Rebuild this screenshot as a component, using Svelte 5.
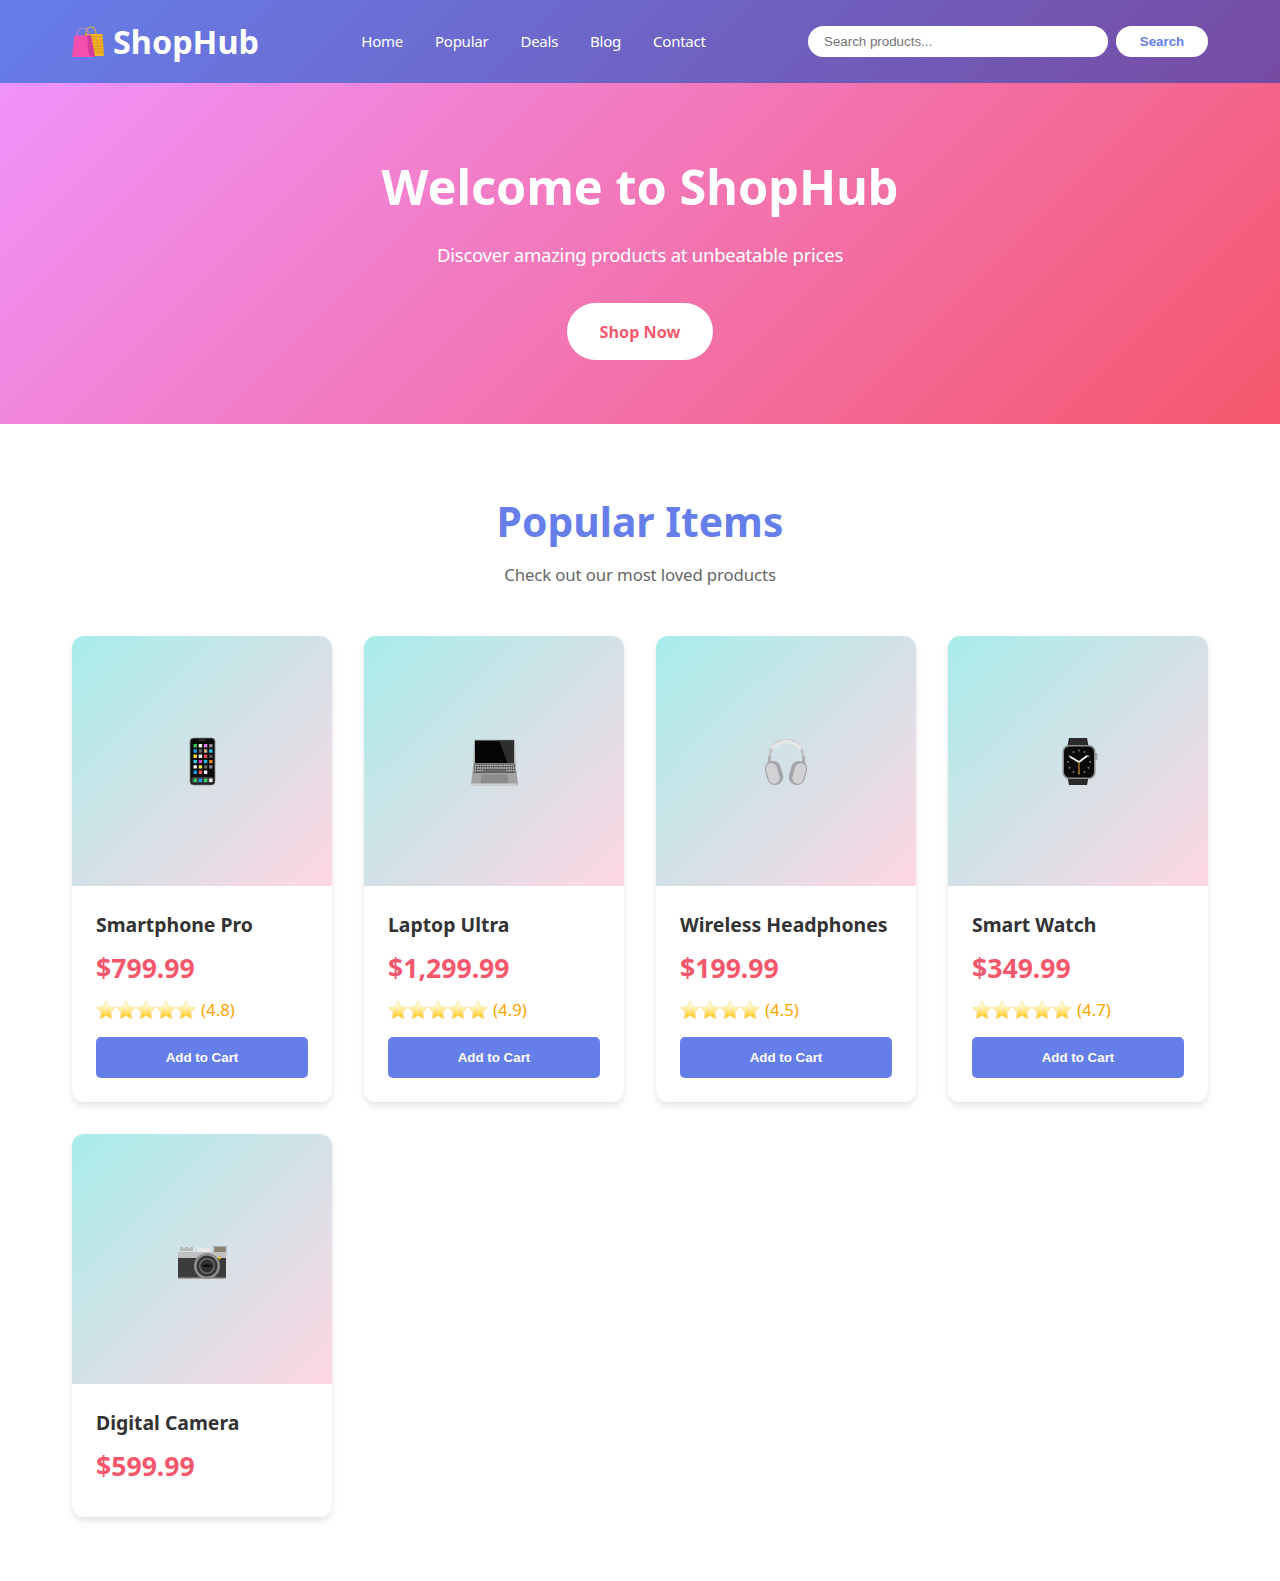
<script>
	const products = [
		{ name: 'Smartphone Pro', price: '$799.99', rating: '4.8', stars: 5, icon: 'phone', buy: true },
		{ name: 'Laptop Ultra', price: '$1,299.99', rating: '4.9', stars: 5, icon: 'laptop', buy: true },
		{ name: 'Wireless Headphones', price: '$199.99', rating: '4.5', stars: 4, icon: 'headphones', buy: true },
		{ name: 'Smart Watch', price: '$349.99', rating: '4.7', stars: 5, icon: 'watch', buy: true },
		{ name: 'Digital Camera', price: '$599.99', icon: 'camera', buy: false }
	];
	const links = ['Home', 'Popular', 'Deals', 'Blog', 'Contact'];

	const appColors = [
		['#34c759', '#f2f2f2', '#e27ce0', '#8e8e8e'],
		['#1e9bf0', '#666', '#c9b38a', '#2ac0e8'],
		['#f7d93e', '#eee', '#e5484d', '#555'],
		['#2ad0e0', '#e040d0', '#25b8e8', '#f08a10'],
		['#f5f5f5', '#f7e03a', '#666', '#888'],
		['#1e9bf0', '#ef5a50', '#f2f2f2', null]
	];
	const dock = ['#3ccf5f', '#1e9bf0', '#3ccf5f', '#eee'];
</script>

{#snippet star()}
	<svg class="star" viewBox="0 0 20 20" aria-hidden="true">
		<path d="M10 .5L13 6.600 19.600 7.500 14.900 12.200 16 18.900 10 15.800 4 18.900 5.100 12.200 .4 7.500 7 6.600z" fill="url(#starFill)" stroke="#f7e6b0" stroke-width=".9" stroke-linejoin="round" />
	</svg>
{/snippet}

{#snippet icon(kind)}
	<svg class="emoji" viewBox="0 0 56 56" aria-hidden="true">
		{#if kind === 'phone'}
			<rect x="16" y="5" width="25" height="47" rx="3.5" fill="#0c0c0c" stroke="#8a8a8a" stroke-width=".8" />
			<rect x="25" y="6.5" width="7" height="1.4" rx=".7" fill="#333" />
			{#each appColors as row, r}
				{#each row as color, c}
					{#if color}
						<rect x={19.5 + c * 5.2} y={11 + r * 5.3} width="3.4" height="3.4" rx=".5" fill={color} />
					{/if}
				{/each}
			{/each}
			<rect x="17.5" y="44" width="22" height="6.5" rx="1.5" fill="#3b3b3b" />
			{#each dock as color, c}
				<rect x={19.5 + c * 5.2} y="45.6" width="3.4" height="3.4" rx=".5" fill={color} />
			{/each}
		{:else if kind === 'laptop'}
			<path d="M8 7.5q0-1 1-1h39q1 0 1 1l1 24H7z" fill="#b5b5b5" />
			<rect x="9" y="7.500" width="39" height="24" fill="#040404" />
			<path d="M33 7.500h15v24h-6z" fill="#2e2e2e" />
			<path d="M7.500 30h42l2.500 21.500q0 1-1.200 1H6.200q-1.200 0-1.200-1z" fill="#a3a3a3" />
			<path d="M8.500 30.500h40l.8 9.500H7.700z" fill="#5c5c5c" />
			<path d="M9 32.400h39M8.700 35h39.600M8.400 37.600h40.200" stroke="#c4c4c4" stroke-width="1.300" stroke-dasharray="1.600 .8" />
			<path d="M17 37h23v1.600H17z" fill="#6a6a6a" />
			<path d="M15.500 41.500h26l.8 9H14.700z" fill="#8b8b8b" />
			<path d="M5.200 50.500h45.600l.2 1.500q0 .5-1 .5H6q-1 0-1-.5z" fill="#cfcfcf" />
		{:else if kind === 'headphones'}
			<path d="M11.500 29C11 14 18 7.500 28.500 7.500S46 14 45.500 29" fill="none" stroke="#c2c2c5" stroke-width="3" />
			<path d="M15 14.500q13.500-12 27 0" fill="none" stroke="#e6e6e8" stroke-width="4" stroke-linecap="round" />
			<rect x="9.800" y="23" width="3.200" height="10" rx="1.500" fill="#b0b0b4" />
			<rect x="44" y="23" width="3.200" height="10" rx="1.500" fill="#b0b0b4" />
			<g transform="rotate(-16 16 40)">
				<rect x="8" y="28" width="16" height="24" rx="7.500" fill="#a4a4a8" />
				<rect x="9.300" y="29.500" width="11" height="21" rx="5.500" fill="#d2d2d5" />
			</g>
			<g transform="rotate(16 40 40)">
				<rect x="32" y="28" width="16" height="24" rx="7.500" fill="#a4a4a8" />
				<rect x="35.700" y="29.500" width="11" height="21" rx="5.500" fill="#d2d2d5" />
			</g>
		{:else if kind === 'watch'}
			<path d="M19 5h18l1.500 8h-21zM17.500 44h21L37 52H19z" fill="#2a2a2a" />
			<rect x="45" y="20" width="2.500" height="7" rx="1" fill="#a8a8a8" />
			<rect x="12.500" y="12" width="33" height="34" rx="6.500" fill="#8c8c8c" />
			<rect x="14" y="13.500" width="30" height="31" rx="5.500" fill="#0a0a0a" />
			{#each Array(12) as _, i}
				<circle cx={29 + 11 * Math.sin((i * Math.PI) / 6)} cy={29 - 11.500 * Math.cos((i * Math.PI) / 6)} r="1" fill="#777" />
			{/each}
			<path d="M29 29l-8.500-5M29 29l8-6" stroke="#fff" stroke-width="1.600" stroke-linecap="round" />
			<path d="M29 29v12" stroke="#b5862f" stroke-width="1.300" />
		{:else if kind === 'camera'}
			<path d="M6 20v-4h3v1.500h2V16h3v1.500h2V16h3v4z" fill="#b8b8b8" />
			<rect x="23" y="17" width="13" height="5" rx="1" fill="#e8e8e8" />
			<rect x="40" y="15.500" width="12" height="8" fill="#8c8070" stroke="#a9a9a9" />
			<rect x="4" y="21" width="48" height="27" rx="1" fill="#3c3c3c" />
			<rect x="4" y="21" width="48" height="6" fill="#c0c0c0" />
			<rect x="4" y="46.500" width="48" height="1.500" fill="#a0a0a0" />
			<circle cx="33" cy="35" r="13" fill="#8f8f8f" />
			<circle cx="33" cy="35" r="10.500" fill="#353535" />
			<circle cx="33" cy="35" r="8" fill="#6a6a6a" />
			<circle cx="33" cy="35" r="6.500" fill="#303030" />
			<path d="M27.500 35q5.500-3.500 11 0q-5.500 2-11 0z" fill="#0d0d0d" />
			<circle cx="45.500" cy="27" r="1.400" fill="#f2c21b" />
		{/if}
	</svg>
{/snippet}

<svg class="defs" width="0" height="0" aria-hidden="true">
	<defs>
		<linearGradient id="starFill" x1="0" y1="0" x2="0" y2="1">
			<stop offset="0" stop-color="#fffdf0" />
			<stop offset=".45" stop-color="#fff0a8" />
			<stop offset=".8" stop-color="#ffd23c" />
			<stop offset="1" stop-color="#f7ab14" />
		</linearGradient>
	</defs>
</svg>

<header class="topbar">
	<div class="container bar-row">
		<div class="logo">
			<svg class="bag" viewBox="0 0 32 32" aria-hidden="true">
				<path d="M14 8q0-7 5-7t5 7" fill="none" stroke="#d9a94a" stroke-width="1.200" />
				<path d="M13 8h17.500L32 30H16z" fill="#f0b429" />
				<path d="M20 11h11M20 14h11M20 17h11.500M20 20h11.500M20 23h11.500M20 26h12" stroke="#d8951c" stroke-width="1" />
				<path d="M5 11q0-9 6-9t6 9" fill="none" stroke="#b78bc8" stroke-width="1.200" />
				<path d="M2.500 9.500H19l4 21.500H0z" fill="#f44fb0" />
				<path d="M15 9.500h4l4 21.500-6-2z" fill="#cf3b96" />
			</svg>
			<span>ShopHub</span>
		</div>
		<nav class="links">
			{#each links as link}
				<a href="#top">{link}</a>
			{/each}
		</nav>
		<form class="search" onsubmit={(e) => e.preventDefault()}>
			<input type="text" placeholder="Search products..." />
			<button type="submit">Search</button>
		</form>
	</div>
</header>

<section class="hero">
	<h1>Welcome to ShopHub</h1>
	<p>Discover amazing products at unbeatable prices</p>
	<button type="button" class="cta">Shop Now</button>
</section>

<main class="container popular">
	<h2>Popular Items</h2>
	<p class="subtitle">Check out our most loved products</p>
	<div class="grid">
		{#each products as product}
			<article class="card">
				<div class="thumb">{@render icon(product.icon)}</div>
				<div class="info">
					<h3>{product.name}</h3>
					<div class="price">{product.price}</div>
					{#if product.buy}
						<div class="rating">
							{#each Array(product.stars) as _}{@render star()}{/each}
							<span>({product.rating})</span>
						</div>
						<button type="button" class="add">Add to Cart</button>
					{/if}
				</div>
			</article>
		{/each}
	</div>
</main>

<style>
	:global(body) {
		margin: 0;
		background: #fff;
		font-family: "Noto Sans", "DejaVu Sans", sans-serif;
		color: #333;
	}

	.defs {
		position: absolute;
	}

	.container {
		box-sizing: border-box;
		max-width: 1200px;
		margin: 0 auto;
		padding: 0 32px;
	}

	.topbar {
		height: 83px;
		background: linear-gradient(135deg, #667eea 0%, #764ba2 100%);
	}

	.bar-row {
		height: 100%;
		display: flex;
		align-items: center;
		justify-content: space-between;
	}

	.logo {
		display: flex;
		align-items: center;
		gap: 9px;
		color: #fff;
		font-size: 32.4px;
		font-weight: 700;
	}

	.logo span,
	.links {
		margin-bottom: 2px;
	}

	.bag {
		width: 32px;
		height: 32px;
	}

	.links {
		display: flex;
		gap: 32px;
	}

	.links a {
		color: #fff;
		text-decoration: none;
		font-size: 15px;
		letter-spacing: -0.24px;
	}

	.search {
		display: flex;
		gap: 8px;
	}

	.search input {
		box-sizing: border-box;
		width: 300px;
		height: 31px;
		padding: 0 16px;
		border: 0;
		border-radius: 25px;
		font-family: "Liberation Sans", Arial, sans-serif;
		font-size: 13.33px;
	}

	.search button {
		width: 92px;
		height: 31px;
		border: 0;
		border-radius: 25px;
		background: #fff;
		color: #667eea;
		font-family: "Liberation Sans", Arial, sans-serif;
		font-size: 13.33px;
		font-weight: 700;
	}

	.hero {
		box-sizing: border-box;
		height: 341px;
		padding-top: 64px;
		text-align: center;
		color: #fff;
		background: linear-gradient(135deg, #f093fb 0%, #f5576c 100%);
	}

	.hero h1 {
		margin: 0 0 14px;
		font-size: 48.6px;
		line-height: 78px;
	}

	.hero p {
		margin: 0 0 32px;
		font-size: 18.5px;
		letter-spacing: -0.25px;
		line-height: 32px;
	}

	.cta {
		box-sizing: border-box;
		width: 146px;
		height: 57px;
		padding: 0;
		border: 0;
		border-radius: 50px;
		background: #fff;
		color: #f5576c;
		font-family: inherit;
		font-size: 16.2px;
		font-weight: 700;
	}

	.popular {
		padding-top: 64px;
		padding-bottom: 63px;
	}

	.popular h2 {
		margin: 0 0 7px;
		text-align: center;
		color: #667eea;
		font-size: 40.8px;
		line-height: 66px;
	}

	.subtitle {
		margin: 0 0 47px;
		text-align: center;
		color: #666;
		font-size: 16.8px;
		letter-spacing: -0.12px;
		line-height: 28px;
	}

	.grid {
		display: grid;
		grid-template-columns: repeat(4, 1fr);
		gap: 32px;
		align-items: start;
	}

	.card {
		overflow: hidden;
		border-radius: 12px;
		background: #fff;
		box-shadow: 0 4px 6px rgba(0, 0, 0, 0.1);
	}

	.thumb {
		height: 250px;
		display: flex;
		align-items: center;
		justify-content: center;
		background: linear-gradient(135deg, #a8edea 0%, #fed6e3 100%);
	}

	.emoji {
		width: 56px;
		height: 56px;
	}

	.info {
		padding: 24px;
	}

	.info h3 {
		margin: 0 0 10px;
		font-size: 19.4px;
		line-height: 30px;
		white-space: nowrap;
		color: #333;
	}

	.price {
		margin-bottom: 9px;
		color: #f5576c;
		font-size: 26.6px;
		line-height: 36px;
		font-weight: 700;
	}

	.rating {
		display: flex;
		align-items: center;
		height: 29px;
		margin-bottom: 13px;
		color: #ffa500;
		font-size: 16.8px;
	}

	.rating span {
		margin-left: 5px;
	}

	.star {
		width: 20px;
		height: 20px;
	}

	.add {
		display: block;
		width: 100%;
		height: 41px;
		border: 0;
		border-radius: 5px;
		background: #667eea;
		color: #fff;
		font-family: "Liberation Sans", Arial, sans-serif;
		font-size: 13.33px;
		font-weight: 700;
	}
</style>
